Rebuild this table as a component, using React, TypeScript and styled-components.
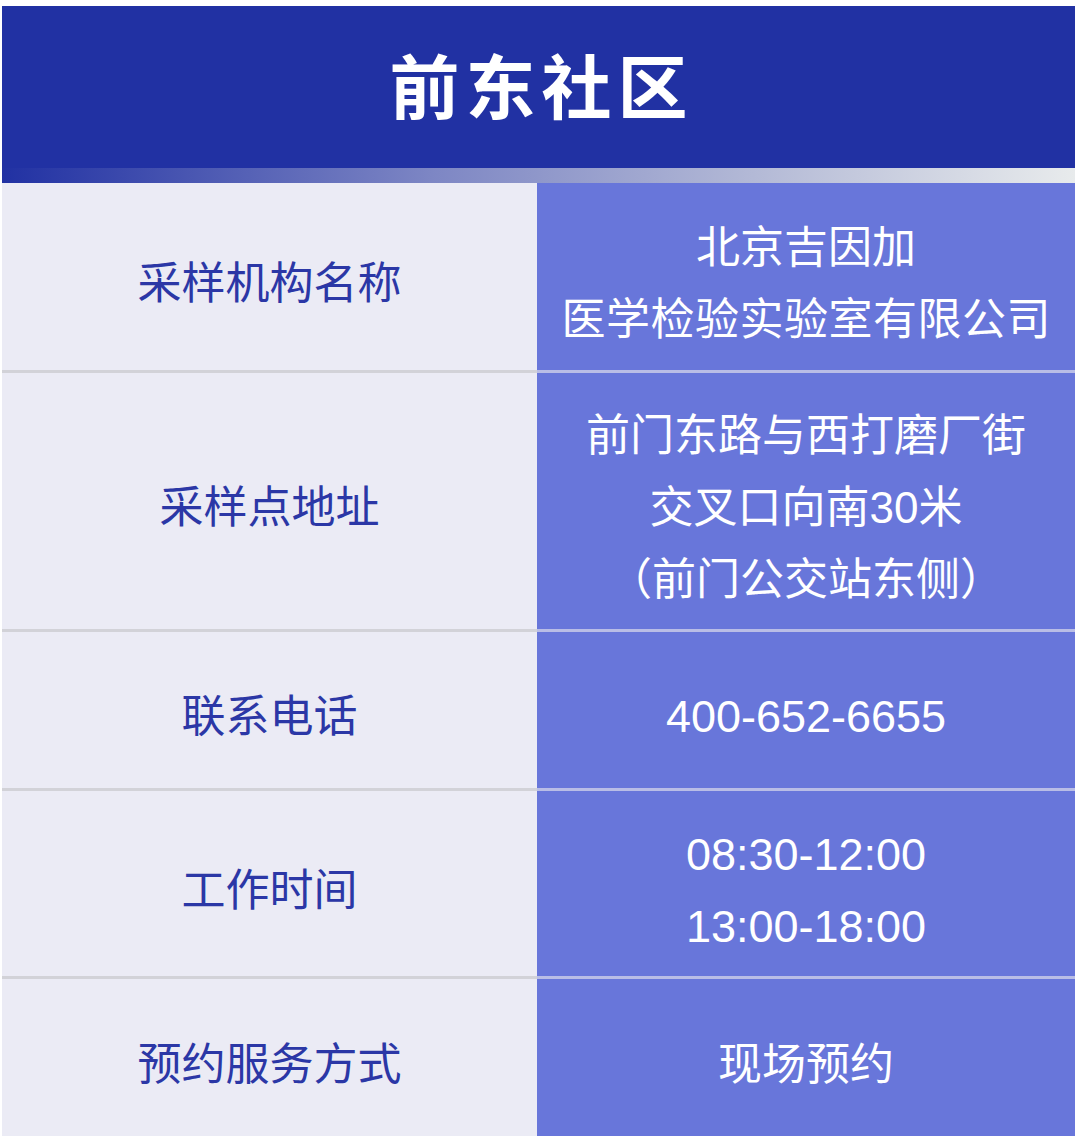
import styled, { createGlobalStyle } from "styled-components";

const GlobalStyle = createGlobalStyle`
  html, body {
    margin: 0;
    padding: 0;
    background: #ffffff;
  }
  body {
    font-family: "Liberation Sans", "Noto Sans CJK SC", sans-serif;
  }
`;

const Page = styled.div`
  width: 1080px;
  padding: 6px 5px 0 2px;
  box-sizing: border-box;
`;

const Header = styled.div`
  height: 162px;
  background: #2131a3;
  display: flex;
  align-items: center;
  justify-content: center;
`;

const Title = styled.h1`
  margin: 0 0 6px 0;
  color: #ffffff;
  font-family: "Noto Sans CJK SC", sans-serif;
  font-weight: 700;
  font-size: 70px;
  letter-spacing: 6px;
  padding-left: 6px;
  line-height: 1;
`;

const Band = styled.div`
  height: 15px;
  background: linear-gradient(90deg, #2131a3 0%, #7d86c4 40%, #b3b9d6 70%, #e8ebec 100%);
`;

const Table = styled.div`
  display: grid;
  grid-template-columns: 535px 1fr;
`;

const Cell = styled.div<{ $h: number; $first?: boolean; $value?: boolean }>`
  height: ${(p) => p.$h - 14}px;
  padding-top: 14px;
  box-sizing: content-box;
  border-top: ${(p) =>
    p.$first ? "none" : `3px solid ${p.$value ? "#b9bde6" : "#d2d2d8"}`};
  background: ${(p) => (p.$value ? "#6876da" : "#ebebf5")};
  color: ${(p) => (p.$value ? "#ffffff" : "#2b37a6")};
  display: flex;
  flex-direction: column;
  align-items: center;
  justify-content: center;
  font-size: 44px;
  line-height: 72px;
  text-align: center;
`;

const Line = styled.div<{ $spread?: number }>`
  white-space: nowrap;
  letter-spacing: ${(p) => p.$spread ?? 0}px;
  margin-right: ${(p) => -(p.$spread ?? 0)}px;
`;

const Digits = styled(Line)`
  font-size: 45px;
`;

const rows: { label: string; value: { text: string; spread?: number; num?: boolean }[]; h: number }[] = [
  {
    label: "采样机构名称",
    value: [{ text: "北京吉因加" }, { text: "医学检验实验室有限公司", spread: 0.5 }],
    h: 187,
  },
  {
    label: "采样点地址",
    value: [
      { text: "前门东路与西打磨厂街" },
      { text: "交叉口向南30米" },
      { text: "（前门公交站东侧）" },
    ],
    h: 256,
  },
  { label: "联系电话", value: [{ text: "400-652-6655", num: true }], h: 156 },
  {
    label: "工作时间",
    value: [
      { text: "08:30-12:00", num: true },
      { text: "13:00-18:00", num: true },
    ],
    h: 185,
  },
  { label: "预约服务方式", value: [{ text: "现场预约" }], h: 157 },
];

export default function App() {
  return (
    <>
      <GlobalStyle />
      <Page>
        <Header>
          <Title>前东社区</Title>
        </Header>
        <Band />
        <Table>
          {rows.map((r, i) => [
            <Cell key={`l${i}`} $h={r.h} $first={i === 0}>
              <Line>{r.label}</Line>
            </Cell>,
            <Cell key={`v${i}`} $h={r.h} $first={i === 0} $value>
              {r.value.map((v) =>
                v.num ? (
                  <Digits key={v.text}>{v.text}</Digits>
                ) : (
                  <Line key={v.text} $spread={v.spread}>
                    {v.text}
                  </Line>
                )
              )}
            </Cell>,
          ])}
        </Table>
      </Page>
    </>
  );
}
